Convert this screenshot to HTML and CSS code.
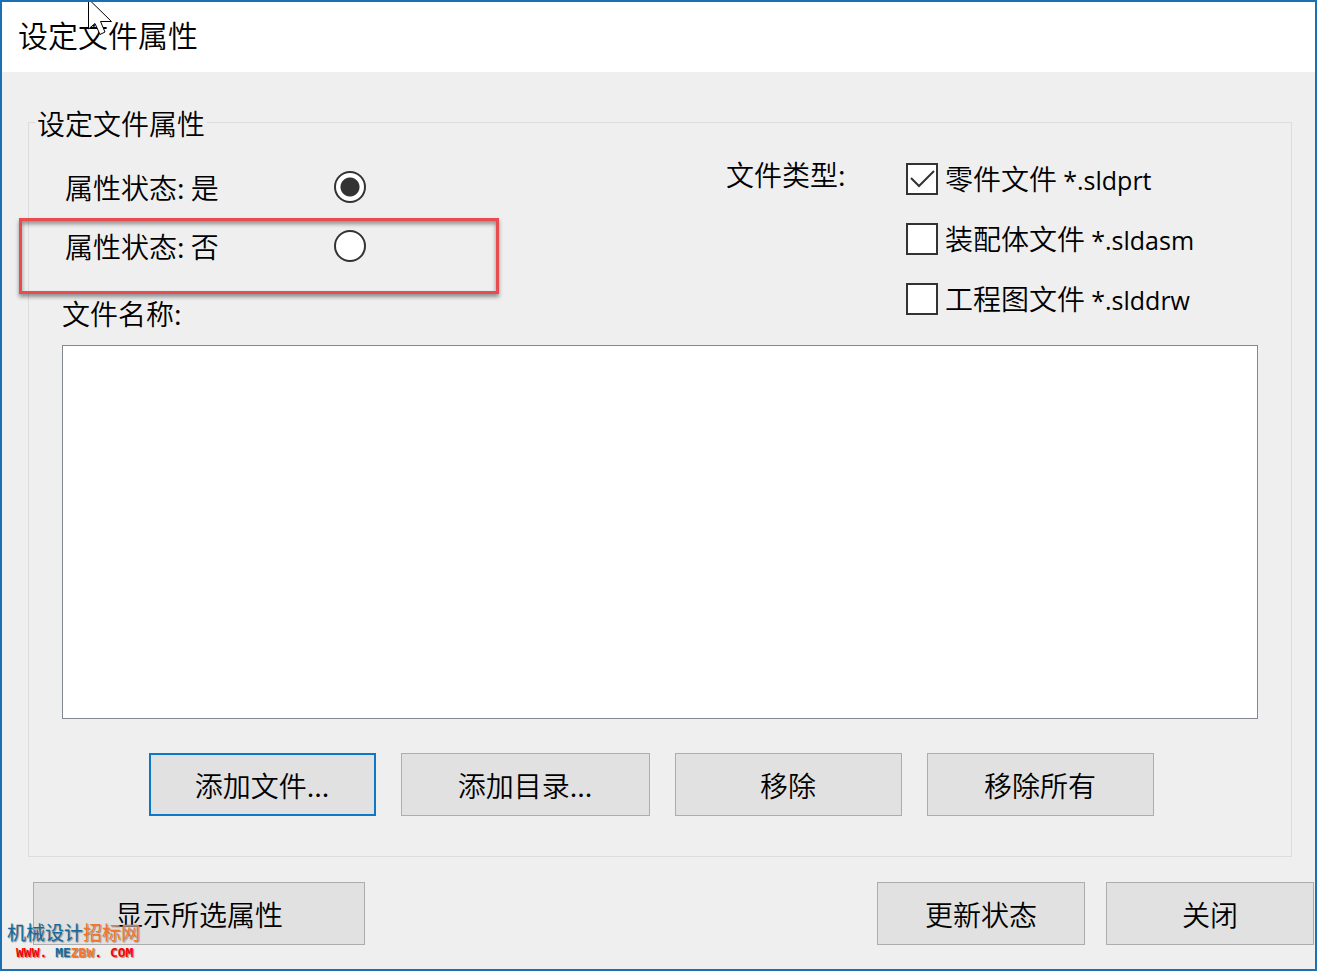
FILE: index.html
```html
<!DOCTYPE html>
<html lang="zh-CN">
<head>
    <meta charset="UTF-8">
    <meta name="viewport" content="width=device-width, initial-scale=1.0">
    <title>设定文件属性</title>
    <link rel="stylesheet" href="styles.css">
</head>
<body>
    <div class="window">
        <header class="titlebar">
            <h1>设定文件属性</h1>
        </header>

        <main class="content">
            <fieldset class="group">
                <legend>设定文件属性</legend>

                <div class="options">
                    <div class="states">
                        <div class="state">
                            <label for="stateYes">属性状态: 是</label>
                            <input type="radio" id="stateYes" name="state" checked>
                        </div>
                        <div class="state">
                            <label for="stateNo">属性状态: 否</label>
                            <input type="radio" id="stateNo" name="state">
                            <span class="highlight"></span>
                        </div>
                        <label class="list-label" for="fileList">文件名称:</label>
                    </div>
                    <div class="types-label">文件类型:</div>
                    <div class="types">
                        <div class="type">
                            <input type="checkbox" id="typePart" checked>
                            <label for="typePart">零件文件 <span class="ext">*.sldprt</span></label>
                        </div>
                        <div class="type">
                            <input type="checkbox" id="typeAsm">
                            <label for="typeAsm">装配体文件 <span class="ext">*.sldasm</span></label>
                        </div>
                        <div class="type">
                            <input type="checkbox" id="typeDrw">
                            <label for="typeDrw">工程图文件 <span class="ext">*.slddrw</span></label>
                        </div>
                    </div>
                </div>

                <select class="file-list" id="fileList" size="8"></select>

                <div class="list-actions">
                    <button type="button" class="default">添加文件...</button>
                    <button type="button" class="wide">添加目录...</button>
                    <button type="button">移除</button>
                    <button type="button">移除所有</button>
                </div>
            </fieldset>
        </main>

        <footer class="footer">
            <button type="button" class="show">显示所选属性</button>
            <button type="button">更新状态</button>
            <button type="button">关闭</button>
        </footer>

        <svg class="cursor" width="28" height="36" viewBox="0 0 28 36">
            <path d="M1.500 -4 V29 L8 23.500 L13 34.500 L18 32 L13.500 21.500 H24.500 L1.500 -1" fill="#fff" stroke="#000"/>
        </svg>

        <div class="watermark">
            <div class="site-name">机械设计<span class="orange">招标网</span></div>
            <div class="site-url">WWW. <span class="blue">ME</span><span class="orange">ZBW</span>. COM</div>
        </div>
    </div>
</body>
</html>
```
FILE: styles.css
```css
* {
    box-sizing: border-box;
}

body {
    margin: 0;
    font-family: "Noto Sans CJK SC", sans-serif;
    font-size: 28px;
    font-weight: 350;
    line-height: 40px;
    color: #000;
}

.window {
    position: relative;
    display: flex;
    flex-direction: column;
    min-height: 100vh;
    border: 2px solid #1a70b5;
    background-color: #efefef;
    overflow: hidden;
}

.titlebar {
    height: 70px;
    padding: 12px 16px;
    background-color: #fff;
}

h1 {
    margin: 0;
    font-size: 30px;
    font-weight: 350;
}

.content {
    flex: 1;
    display: flex;
    padding: 29px 23px 0 26px;
}

.group {
    flex: 1;
    display: flex;
    flex-direction: column;
    min-width: 0;
    margin: 0;
    padding: 6px 33px 40px;
    border: 1px solid #dcdcdc;
}

.group legend {
    margin-left: -27px;
    padding: 2px 2px 0;
}

.options {
    display: flex;
    height: 196px;
}

.states {
    flex: 1;
    padding-top: 8px;
}

.state {
    position: relative;
    display: flex;
    align-items: center;
    height: 59px;
    padding-left: 3px;
}

.state label {
    width: 269px;
}

.list-label {
    display: block;
    padding-top: 18px;
}

.types-label {
    width: 180px;
    padding-top: 5px;
}

.types {
    width: 352px;
}

.type {
    display: flex;
    align-items: center;
    gap: 7px;
    height: 60px;
}

.ext {
    font-family: "Open Sans", sans-serif;
    font-size: 25px;
    font-weight: 400;
}

input {
    appearance: none;
    width: 32px;
    height: 32px;
    margin: 0;
    border: 2px solid #333;
    background-color: #fff;
}

input[type="radio"] {
    border-radius: 50%;
}

input[type="radio"]:checked {
    background-image: radial-gradient(circle, #333 9px, #fff 10px);
}

input[type="checkbox"]:checked {
    background: #fff url("data:image/svg+xml,%3Csvg xmlns='http://www.w3.org/2000/svg' viewBox='0 0 28 28'%3E%3Cpath d='M3 13 L11 21 L26 6' fill='none' stroke='%23333' stroke-width='2'/%3E%3C/svg%3E") no-repeat;
}

/* red frame around the second option */
.highlight {
    position: absolute;
    top: 2px;
    left: -43px;
    width: 480px;
    height: 76px;
    border: 3px solid #e84c4f;
    box-shadow: 0 3px 4px rgba(0, 0, 0, 0.4), inset 0 3px 4px rgba(0, 0, 0, 0.4);
    pointer-events: none;
}

.file-list {
    flex: 1;
    width: 100%;
    min-height: 200px;
    border: 1px solid #82878f;
    border-radius: 0;
    background-color: #fff;
}

.list-actions {
    display: flex;
    justify-content: center;
    gap: 25px;
    padding: 34px 18px 0 0;
}

button {
    width: 227px;
    height: 63px;
    padding: 0;
    border: 1px solid #adadad;
    background-color: #e1e1e1;
    font: inherit;
    color: #000;
}

button:hover {
    background-color: #e5f1fb;
}

.default {
    border: 2px solid #0f77c8;
}

.wide {
    width: 249px;
}

.footer {
    display: flex;
    gap: 21px;
    padding: 25px 1px 24px 31px;
}

.footer button {
    width: 208px;
}

.footer .show {
    width: 332px;
    margin-right: auto;
}

.cursor {
    position: absolute;
    top: -2px;
    left: 85px;
}

.watermark {
    position: absolute;
    left: 5px;
    bottom: 8px;
    font-weight: 400;
    text-shadow: 1px 1px 1px #888;
}

.site-name {
    font-size: 19px;
    line-height: 24px;
    color: #14699c;
}

.site-url {
    padding-left: 9px;
    font-family: "DejaVu Sans Mono", monospace;
    font-size: 13px;
    font-weight: 700;
    line-height: 17px;
    color: #f00;
}

.orange {
    color: #f5762a;
}

.blue {
    color: #14699c;
}
```
